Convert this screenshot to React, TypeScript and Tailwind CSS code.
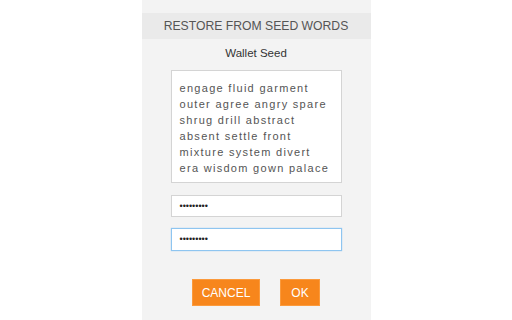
export default function App() {
  const seed = [
    "engage fluid garment",
    "outer agree angry spare",
    "shrug drill abstract",
    "absent settle front",
    "mixture system divert",
    "era wisdom gown palace",
  ];

  return (
    <div className="h-[320px] w-[512px] bg-white font-['Liberation_Sans',Arial,sans-serif]">
      <div className="mx-auto flex h-full w-[229px] flex-col items-center bg-[#f3f3f3] pt-[13px]">
        {/* header */}
        <div className="flex h-[26px] w-full items-center justify-center bg-[#eaeaea] text-[12.2px] text-[#555]">
          RESTORE FROM SEED WORDS
        </div>

        <div className="mt-[7px] text-[11.5px] leading-[14px] text-[#333]">Wallet Seed</div>

        {/* seed box */}
        <div className="mt-[10px] h-[113px] w-[171px] border border-[#d4d4d4] bg-white pl-[8px] pt-[9px] text-[11px] leading-[16px] tracking-[1.3px] text-[#555]">
          {seed.map((line) => (
            <div key={line}>{line}</div>
          ))}
        </div>

        {/* passwords */}
        <div className="mt-[12px] flex h-[22px] w-[171px] items-center border border-[#d4d4d4] bg-white pl-[8px] text-[9px] leading-none text-[#222]">
          •••••••••
        </div>
        <div className="mt-[11px] flex h-[23px] w-[171px] items-center border border-[#8ec5f0] bg-white pl-[8px] text-[9px] leading-none text-[#222] shadow-[0_0_1px_#8ec5f0]">
          •••••••••
        </div>

        {/* buttons */}
        <div className="mt-[28px] flex gap-[20px]">
          <button className="h-[27px] w-[68px] border border-[#fb9a3c] bg-[#f7861c] text-[12px] text-white">
            CANCEL
          </button>
          <button className="h-[27px] w-[40px] border border-[#fb9a3c] bg-[#f7861c] text-[12px] text-white">
            OK
          </button>
        </div>
      </div>
    </div>
  );
}
